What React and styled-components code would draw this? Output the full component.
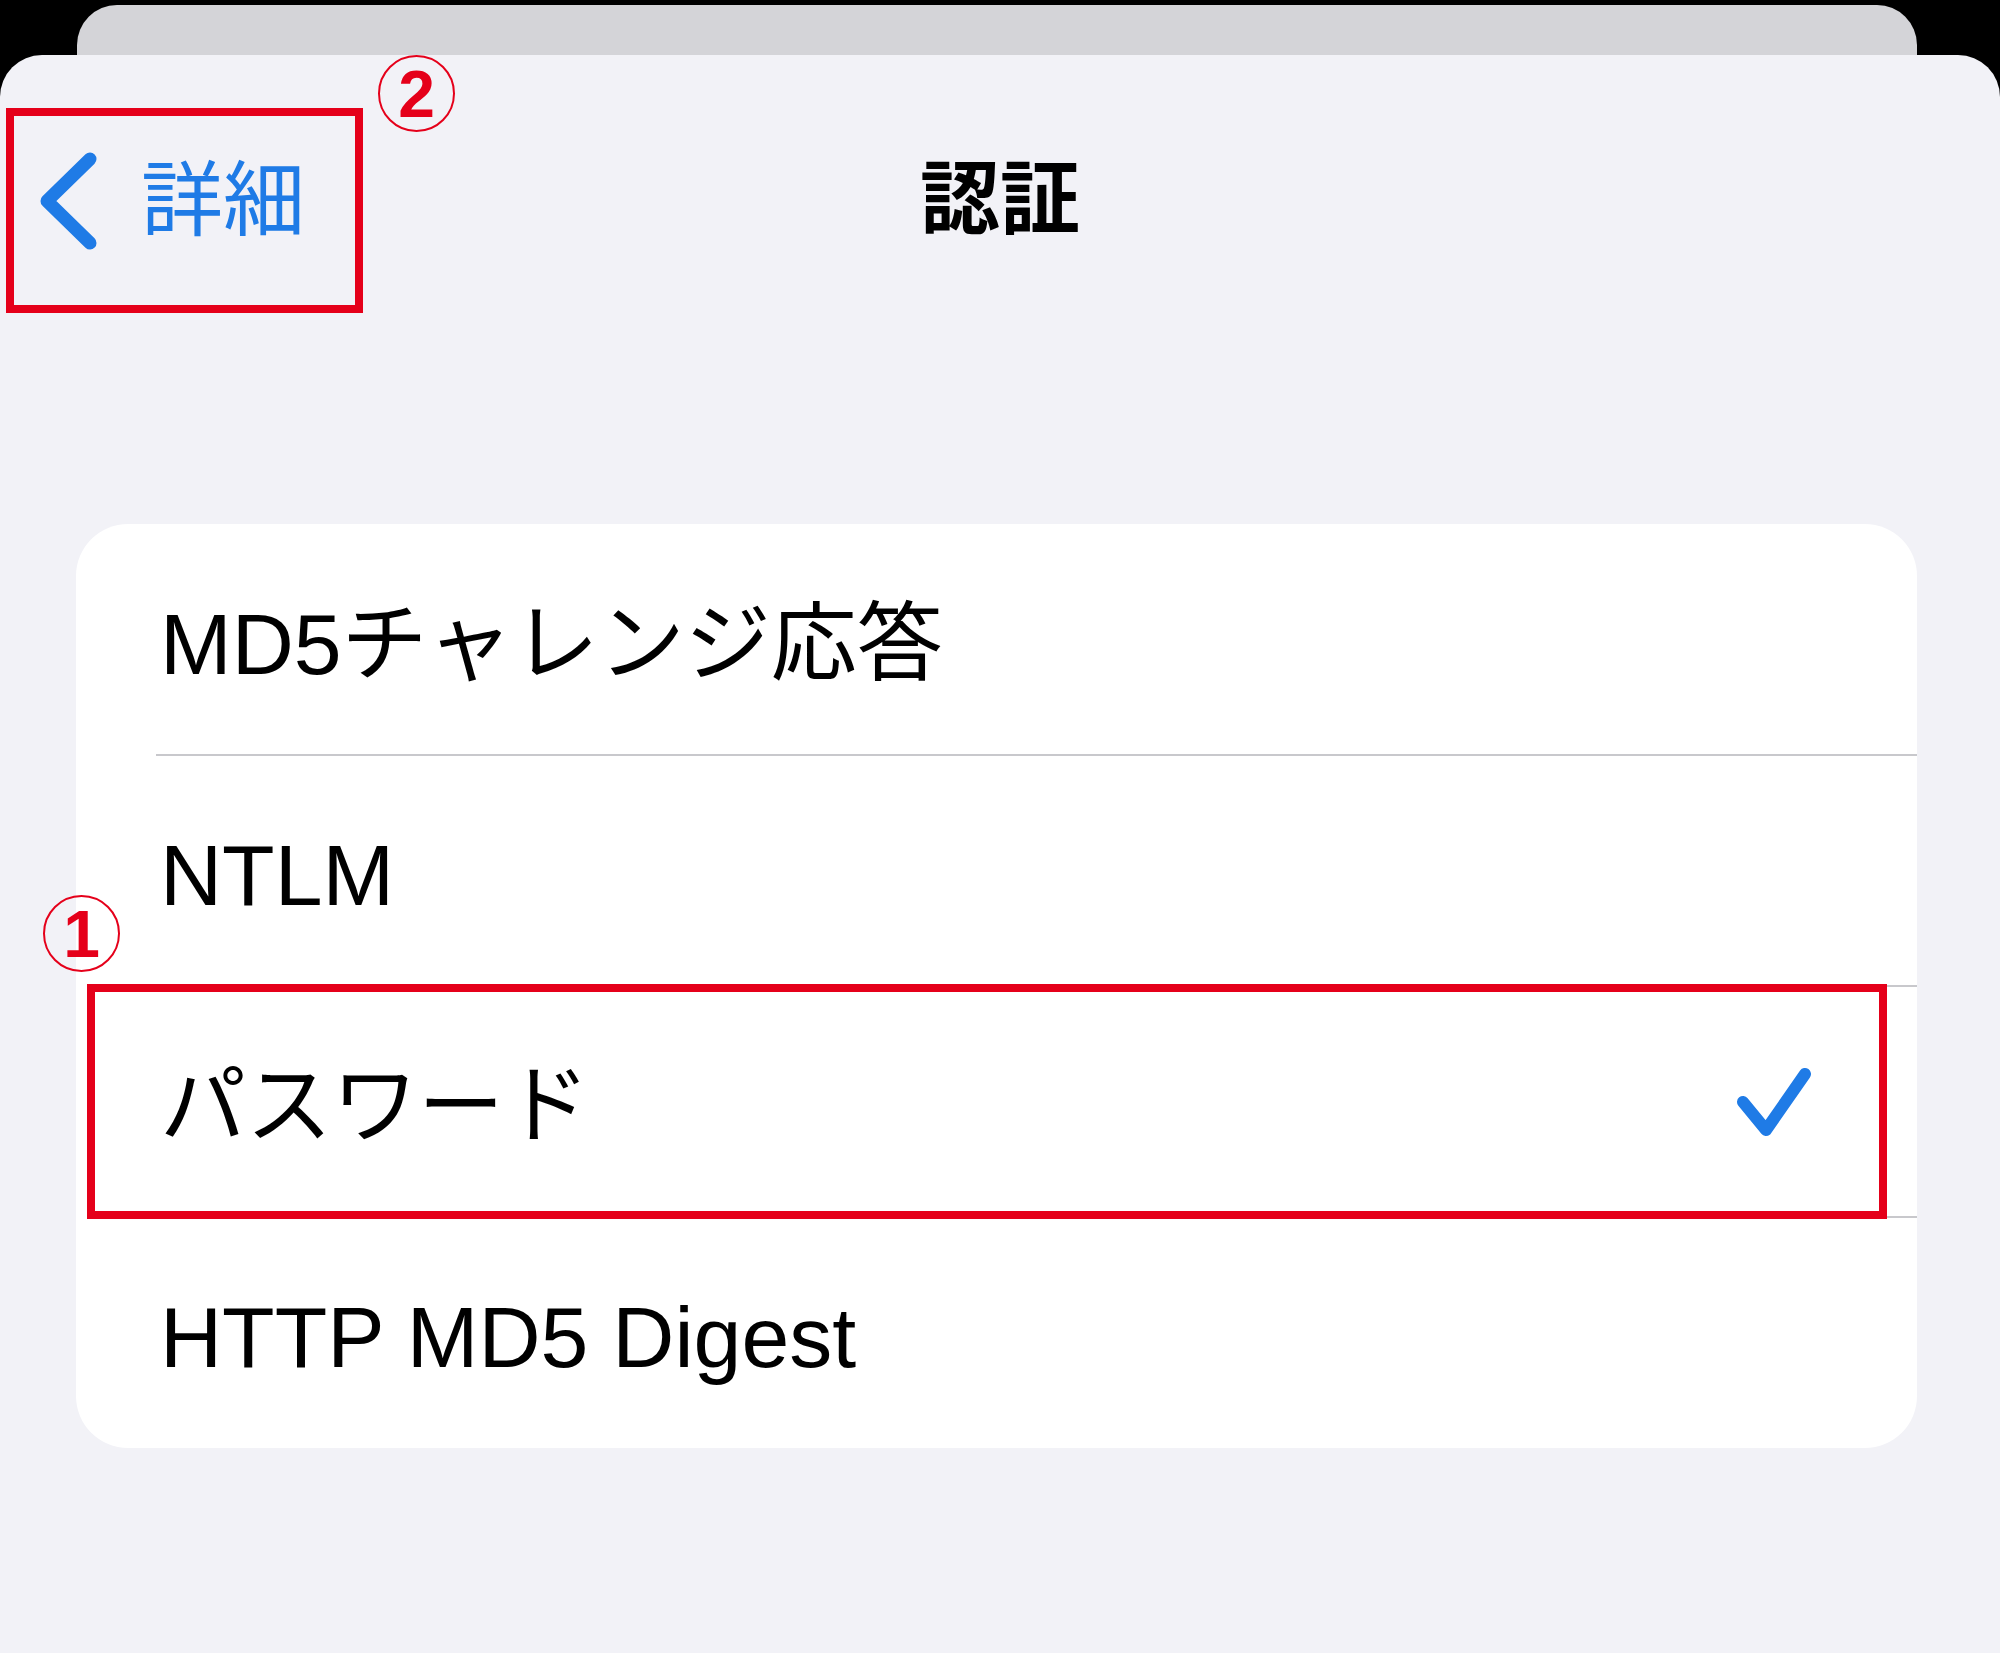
import React from "react";
import styled, { createGlobalStyle } from "styled-components";

const RED = "#e5001a";
const BLUE = "#1f7be6";

const GlobalStyle = createGlobalStyle`
  html, body {
    margin: 0;
    padding: 0;
    background: #000;
  }
  body {
    font-family: "Liberation Sans", "Noto Sans CJK JP", sans-serif;
  }
`;

const Screen = styled.div`
  width: 2000px;
  height: 1653px;
  box-sizing: border-box;
  padding-top: 5px;
  display: flex;
  flex-direction: column;
  background: #000;
  overflow: hidden;
`;

const StackedSheet = styled.div`
  flex-shrink: 0;
  height: 50px;
  margin: 0 83px 0 77px;
  background: #d4d4d8;
  border-radius: 40px 40px 0 0;
`;

const Sheet = styled.div`
  flex: 1;
  display: flex;
  flex-direction: column;
  background: #f2f2f7;
  border-radius: 42px 42px 0 0;
`;

const NavBar = styled.div`
  flex-shrink: 0;
  height: 290px;
  display: grid;
  grid-template-columns: 1fr auto 1fr;
  align-items: center;
`;

const BackHighlight = styled.div`
  position: relative;
  justify-self: start;
  align-self: start;
  margin: 53px 0 0 6px;
  width: 357px;
  height: 205px;
  box-sizing: border-box;
  border: 8px solid ${RED};
  display: flex;
  align-items: center;
  gap: 37px;
  padding: 0 0 20px 20px;
  color: ${BLUE};
`;

const BackLabel = styled.span`
  font-size: 82px;
  line-height: 1;
`;

const Title = styled.h1`
  margin: 0;
  font-size: 80px;
  font-weight: 700;
  line-height: 1;
  color: #000;
`;

const Marker = styled.span`
  position: absolute;
  top: ${(p) => p.$top}px;
  left: ${(p) => p.$left};
  width: 77px;
  height: 77px;
  box-sizing: border-box;
  border: 2px solid ${RED};
  border-radius: 50%;
  display: flex;
  align-items: center;
  justify-content: center;
  color: ${RED};
  font-family: "Liberation Sans", sans-serif;
  font-size: 66px;
  font-weight: 700;
  line-height: 1;
  z-index: 2;
`;

const Card = styled.div`
  margin: 179px 83px 0 76px;
  background: #fff;
  border-radius: 52px;
`;

const Row = styled.div`
  position: relative;
  height: 231px;
  box-sizing: border-box;
  display: flex;
  align-items: center;
  justify-content: space-between;
  padding: 9px 99px 0 84px;
  color: #000;

  & + &::before {
    content: "";
    position: absolute;
    top: -1px;
    left: 80px;
    right: 0;
    height: 2px;
    background: #c8c8cc;
  }
`;

const RowLabel = styled.span`
  font-size: 86px;
  line-height: 1;
`;

const RowHighlight = styled.div`
  position: absolute;
  left: 11px;
  right: 30px;
  top: -2px;
  bottom: -2px;
  border: 8px solid ${RED};
  z-index: 1;
  pointer-events: none;
`;

const Chevron = () => (
  <svg width="70" height="112" viewBox="0 0 70 112">
    <polyline
      points="56,14 13,56 56,98"
      fill="none"
      stroke={BLUE}
      strokeWidth="13"
      strokeLinecap="round"
      strokeLinejoin="round"
    />
  </svg>
);

const Check = () => (
  <svg width="88" height="80" viewBox="0 0 88 80" style={{ marginTop: -9 }}>
    <polyline
      points="13,40 36,68 75,12"
      fill="none"
      stroke={BLUE}
      strokeWidth="12"
      strokeLinecap="round"
      strokeLinejoin="round"
    />
  </svg>
);

const methods = [
  { label: "MD5チャレンジ応答" },
  { label: "NTLM" },
  { label: "パスワード", checked: true, marker: "1" },
  { label: "HTTP MD5 Digest" },
];

export default function App() {
  return (
    <>
      <GlobalStyle />
      <Screen>
        <StackedSheet />
        <Sheet>
          <NavBar>
            <BackHighlight>
              <Chevron />
              <BackLabel>詳細</BackLabel>
              <Marker $top={-61} $left="calc(100% + 23px)">
                2
              </Marker>
            </BackHighlight>
            <Title>認証</Title>
            <div />
          </NavBar>

          <Card>
            {methods.map((m) => (
              <Row key={m.label}>
                <RowLabel>{m.label}</RowLabel>
                {m.checked && <Check />}
                {m.marker && (
                  <>
                    <RowHighlight />
                    <Marker $top={-91} $left="-33px">
                      {m.marker}
                    </Marker>
                  </>
                )}
              </Row>
            ))}
          </Card>
        </Sheet>
      </Screen>
    </>
  );
}
